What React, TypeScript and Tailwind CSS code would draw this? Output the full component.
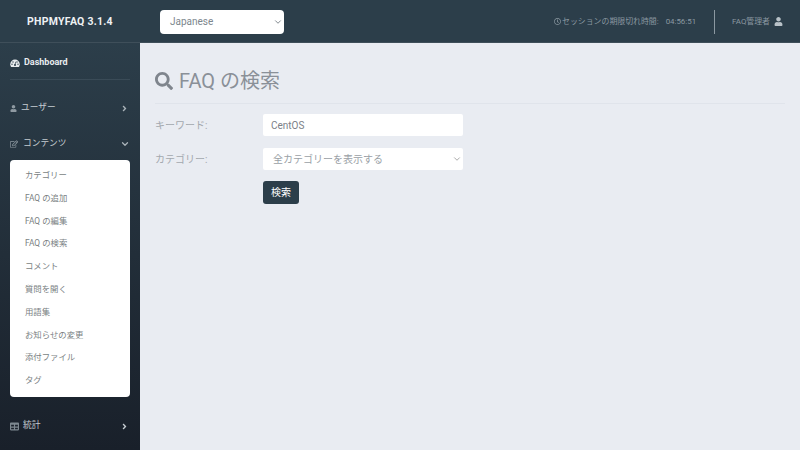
import { FaAngleRight, FaRegClock, FaRegEdit, FaSearch, FaTable, FaUser } from 'react-icons/fa'
import { ChevronDown } from 'lucide-react'

const menuItems = [
  'カテゴリー',
  'FAQ の追加',
  'FAQ の編集',
  'FAQ の検索',
  'コメント',
  '質問を開く',
  '用語集',
  'お知らせの変更',
  '添付ファイル',
  'タグ',
]

const font = "font-['Roboto','Noto_Sans_CJK_JP',sans-serif]"

function DashboardIcon() {
  return (
    <svg viewBox="0 0 20 16" className="w-[10px] h-[8px] mr-[4px] shrink-0">
      <path d="M10 1a9.5 9.5 0 0 0-9.5 9.5c0 1.8.5 3.5 1.4 4.9.2.3.5.4.8.4h14.6c.3 0 .6-.1.8-.4.9-1.4 1.4-3.1 1.4-4.9A9.5 9.5 0 0 0 10 1z" fill="#e8ecef" />
      <circle cx="4" cy="10.5" r="1.3" fill="#2c3e4a" />
      <circle cx="6" cy="6" r="1.3" fill="#2c3e4a" />
      <circle cx="14" cy="6" r="1.3" fill="#2c3e4a" />
      <circle cx="16" cy="10.5" r="1.3" fill="#2c3e4a" />
      <circle cx="10" cy="12" r="2" fill="#2c3e4a" />
      <path d="M10 12l1.5-6.5" stroke="#2c3e4a" strokeWidth="1.4" />
    </svg>
  )
}

export default function App() {
  return (
    <div className={`w-[800px] h-[450px] flex flex-col overflow-hidden bg-[#1d262e] ${font}`}>
      {/* top bar */}
      <header className="h-[43px] shrink-0 flex items-center pt-[1px] bg-[#2c3e4a] border-b border-[#3f4f5a]">
        <div className="w-[140px] text-center text-[10.5px] font-bold tracking-[0.25px] text-[#eef1f3]">
          PHPMYFAQ 3.1.4
        </div>
        <div className="ml-5 w-[124px] h-6 bg-white rounded flex items-center justify-between pl-[10px] pr-[1px] text-[10px] text-[#7d868d]">
          <span>Japanese</span>
          <ChevronDown size={10} strokeWidth={2} className="text-[#6b747b]" />
        </div>
        <div className="ml-auto flex items-center text-[7.9px] text-[#8b98a1]">
          <FaRegClock className="text-[7px] mr-[1px]" />
          <span>セッションの期限切れ時間:</span>
          <span className="ml-[7px]">04:56:51</span>
          <div className="w-px h-6 bg-[#8b98a1] ml-[18px] mr-[17px]" />
          <span>FAQ管理者</span>
          <FaUser className="text-[9px] ml-[4px] mr-[17px] text-[#b9c2c8]" />
        </div>
      </header>

      <div className="flex-1 flex min-h-0">
        {/* sidebar */}
        <aside className="w-[140px] shrink-0 bg-gradient-to-b from-[#2c3e4a] to-[#19202a] flex flex-col">
          <div className="mx-[10px] mt-[8px] h-[29px] flex items-center pb-[5px] border-b border-[#3a4b57] text-[9px] font-bold text-[#e8ecef]">
            <DashboardIcon />
            Dashboard
          </div>
          <div className="mt-[21px] h-[14px] px-[10px] flex items-center text-[8.7px] text-[#c5ccd1]">
            <FaUser className="text-[7px] mr-[4px] text-[#8f9aa2]" />
            ユーザー
            <FaAngleRight className="ml-auto text-[9px] mr-[1px] text-[#aab3b9]" />
          </div>
          <div className="mt-[22px] h-[14px] px-[10px] flex items-center text-[8.7px] text-[#c5ccd1]">
            <FaRegEdit className="text-[8px] mr-[5px] text-[#8f9aa2]" />
            コンテンツ
            <ChevronDown size={10} strokeWidth={3} className="ml-auto text-[#aab3b9]" />
          </div>
          <div className="mx-[10px] mt-[9px] h-[237px] bg-white rounded pt-[4px]">
            {menuItems.map((item) => (
              <div key={item} className="h-[22.8px] pl-[15px] flex items-center text-[8.4px] text-[#7a7f83]">
                {item}
              </div>
            ))}
          </div>
          <div className="mt-[22px] h-[14px] px-[10px] flex items-center text-[8.8px] text-[#c5ccd1]">
            <FaTable className="text-[9px] mr-[4px] text-[#7d8890]" />
            統計
            <FaAngleRight className="ml-auto text-[9px] mr-[1px] text-[#c5ccd1]" />
          </div>
        </aside>

        {/* main */}
        <main className="flex-1 bg-[#e9ecf2] px-[15px]">
          <div className="mt-[21px] h-[39px] pb-[5px] flex items-center text-[20px] text-[#8a9098]">
            <FaSearch className="text-[18px] mr-[6px] text-[#7f858d]" />
            FAQ の検索
          </div>
          <div className="border-b border-[#e0e4eb]" />
          <div className="mt-[10px] flex items-center h-[22px]">
            <label className="w-[108px] text-[10px] text-[#a3a8ae]">キーワード:</label>
            <div className="w-[200px] h-[22px] bg-white rounded-[2px] pl-2 flex items-center text-[10px] text-[#7b8087]">
              CentOS
            </div>
          </div>
          <div className="mt-[12px] flex items-center h-[22px]">
            <label className="w-[108px] text-[10px] text-[#a3a8ae]">カテゴリー:</label>
            <div className="w-[200px] h-[22px] bg-white rounded-[2px] pl-[10px] pr-[1px] flex items-center justify-between text-[10px] text-[#9a9fa6]">
              <span>全カテゴリーを表示する</span>
              <ChevronDown size={10} strokeWidth={1.5} className="text-[#777]" />
            </div>
          </div>
          <div className="mt-[11px] ml-[108px] w-[36px] h-[23px] bg-[#2c3e4a] rounded-[3px] flex items-center justify-center text-[10px] text-white">
            検索
          </div>
        </main>
      </div>
    </div>
  )
}
